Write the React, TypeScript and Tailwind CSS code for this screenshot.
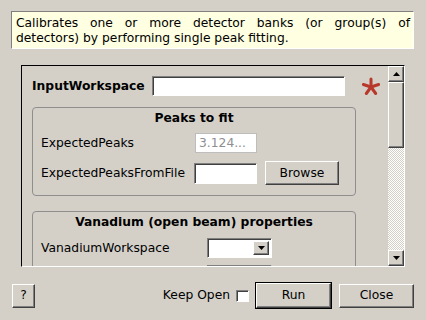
import React from "react";

// Classic Qt (Windows style) bevels
const raised =
  "bg-[#d4d0c8] border border-t-white border-l-white border-b-[#404040] border-r-[#404040] shadow-[inset_-1px_-1px_0_#808080]";
const sunken =
  "bg-white border border-t-[#808080] border-l-[#808080] border-b-white border-r-white shadow-[inset_1px_1px_0_#404040]";

function Arrow({ up }: { up?: boolean }) {
  return (
    <svg width="7" height="4" viewBox="0 0 7 4">
      <polygon points={up ? "0,4 7,4 3.5,0" : "0,0 7,0 3.5,4"} fill="#000" />
    </svg>
  );
}

function Combo({ width }: { width: string }) {
  return (
    <div className={`${sunken} ${width} h-[20px] flex justify-end p-[2px]`}>
      <div className={`${raised} w-[16px] h-full flex items-center justify-center`}>
        <Arrow />
      </div>
    </div>
  );
}

function Asterisk() {
  return (
    <svg width="20" height="20" viewBox="-10 -10 20 20">
      <g stroke="#b8392b" strokeWidth="3" strokeLinecap="round">
        <line x1="0" y1="0" x2="0" y2="-8" />
        <line x1="0" y1="0" x2="7.6" y2="-2.5" />
        <line x1="0" y1="0" x2="-7.6" y2="-2.5" />
        <line x1="0" y1="0" x2="4.7" y2="6.5" />
        <line x1="0" y1="0" x2="-4.7" y2="6.5" />
      </g>
    </svg>
  );
}

export default function App() {
  return (
    <div className="w-[426px] h-[320px] bg-[#d4d0c8] font-['DejaVu_Sans',sans-serif] text-[12.3px] text-black overflow-hidden flex flex-col">
      {/* description */}
      <div className="mt-[11px] ml-[11px] w-[403px] h-[38px] bg-[#ffffe1] border border-t-[#808080] border-l-[#808080] border-b-white border-r-white pl-[4px] pr-[3px] pt-[4px] leading-[15px] text-justify">
        Calibrates one or more detector banks (or group(s) of detectors) by performing single peak fitting.
      </div>

      {/* scroll area */}
      <div className="mt-[16px] ml-[21px] w-[384px] h-[202px] border border-t-black border-l-black border-b-white border-r-white flex">
        <div className="flex-1 overflow-hidden pl-[10px] pt-[10px]">
          <div className="flex items-center h-[20px]">
            <span className="w-[120px] font-bold">InputWorkspace</span>
            <div className={`${sunken} w-[193px] h-[20px]`} />
            <div className="ml-[16px] mt-[2px]">
              <Asterisk />
            </div>
          </div>

          {/* Peaks to fit */}
          <div className="mt-[11px] w-[324px] h-[89px] border border-[#8e8e8e] rounded-[4px] pl-[8px] pt-[3px]">
            <div className="text-center font-bold leading-[14px] pr-[8px]">Peaks to fit</div>
            <div className="mt-[8px] flex items-center h-[20px]">
              <span className="w-[154px]">ExpectedPeaks</span>
              <div className="w-[62px] h-[20px] bg-white border border-[#bdbdbd] text-[#8f8f8f] leading-[18px] pl-[3px]">
                3.124...
              </div>
            </div>
            <div className="mt-[8px] flex items-center h-[24px]">
              <span className="w-[153px]">ExpectedPeaksFromFile</span>
              <div className={`${sunken} w-[63px] h-[21px]`} />
              <button className={`${raised} ml-[8px] w-[74px] h-[24px] text-[12.3px]`}>Browse</button>
            </div>
          </div>

          {/* Vanadium */}
          <div className="mt-[15px] w-[324px] h-[80px] border border-[#8e8e8e] rounded-[4px] pl-[8px] pt-[3px]">
            <div className="text-center font-bold leading-[14px] pr-[8px]">Vanadium (open beam) properties</div>
            <div className="mt-[9px] flex items-center h-[20px]">
              <span className="w-[166px]">VanadiumWorkspace</span>
              <Combo width="w-[65px]" />
            </div>
            <div className="mt-[7px] flex">
              <span className="w-[166px]" />
              <Combo width="w-[65px]" />
            </div>
          </div>
        </div>

        {/* scrollbar */}
        <div className="w-[16px] flex flex-col">
          <div className={`${raised} h-[16px] flex items-center justify-center`}>
            <Arrow up />
          </div>
          <div className={`${raised} h-[66px]`} />
          <div className="flex-1 bg-[repeating-conic-gradient(#ffffff_0_25%,#d4d0c8_0_50%)] bg-[length:2px_2px]" />
          <div className={`${raised} h-[16px] flex items-center justify-center`}>
            <Arrow />
          </div>
        </div>
      </div>

      {/* bottom bar */}
      <div className="mt-[15px] flex items-center h-[27px]">
        <button className={`${raised} ml-[12px] w-[23px] h-[24px] text-[12.3px]`}>?</button>
        <span className="ml-auto">Keep Open</span>
        <div className={`${sunken} ml-[6px] w-[13px] h-[12px]`} />
        <div className="ml-[6px] border border-black">
          <button className={`${raised} w-[75px] h-[25px] text-[12.3px]`}>Run</button>
        </div>
        <button className={`${raised} ml-[7px] mr-[12px] w-[75px] h-[24px] text-[12.3px]`}>Close</button>
      </div>
    </div>
  );
}
